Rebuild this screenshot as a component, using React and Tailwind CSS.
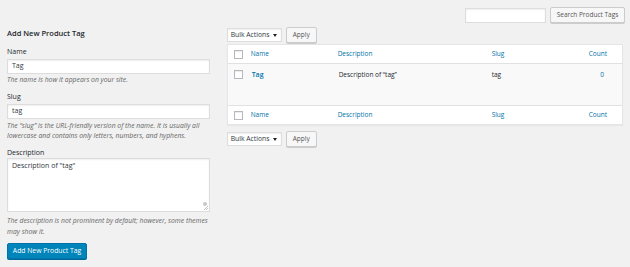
import React from 'react';

const COLUMNS = [
  { key: 'name', label: 'Name', cls: 'w-[87px]' },
  { key: 'description', label: 'Description', cls: 'w-[154px]' },
  { key: 'slug', label: 'Slug', cls: 'flex-1' },
];

function Checkbox() {
  return (
    <div className="w-[9px] h-[9px] bg-white border border-[#b4b9be] shadow-[inset_0_1px_1px_rgba(0,0,0,0.08)]" />
  );
}

function HeadRow({ top }) {
  return (
    <div className={`flex items-center h-[19px] bg-white ${top ? 'border-b' : 'border-t'} border-[#e1e1e1]`}>
      <div className="w-[23px] pl-[6px] flex items-center">
        <Checkbox />
      </div>
      {COLUMNS.map((c) => (
        <div key={c.key} className={`${c.cls} text-[#0073aa]`}>{c.label}</div>
      ))}
      <div className="w-[40px] pr-[15px] text-right text-[#0073aa]">Count</div>
    </div>
  );
}

function BulkBar() {
  return (
    <div className="flex items-center gap-[4px]">
      <div className="flex items-center justify-between w-[55px] h-[14px] bg-white border border-[#ddd] shadow-[inset_0_1px_2px_rgba(0,0,0,0.07)] pl-[3px] pr-[4px] text-[#32373c] text-[6.8px]">
        <span>Bulk Actions</span>
        <svg width="4" height="3" viewBox="0 0 4 3"><path d="M0 0h4L2 3z" fill="#222" /></svg>
      </div>
      <button type="button" className="w-[31px] h-[16px] bg-[#f7f7f7] border border-[#ccc] rounded-[2px] shadow-[0_1px_0_#ccc] text-[#555]">
        Apply
      </button>
    </div>
  );
}

export default function App() {
  return (
    <div className="w-[630px] h-[267px] bg-[#f1f1f1] text-[#23282d] font-['Open_Sans',sans-serif] text-[6.5px] flex px-[7px] overflow-hidden">
      {/* add tag form */}
      <div className="w-[203px] pt-[28px]">
        <h2 className="text-[7.5px] leading-[10px] font-semibold">Add New Product Tag</h2>

        <div className="mt-[9px] leading-[10px] text-[7px]">Name</div>
        <div className="mt-[2px] h-[15px] bg-white border border-[#ddd] shadow-[inset_0_1px_2px_rgba(0,0,0,0.07)] px-[4px] flex items-center text-[7px] text-[#32373c]">Tag</div>
        <p className="mt-[1px] leading-[10px] italic text-[6.8px] text-[#666]">The name is how it appears on your site.</p>

        <div className="mt-[7px] leading-[10px] text-[7px]">Slug</div>
        <div className="mt-[2px] h-[15px] bg-white border border-[#ddd] shadow-[inset_0_1px_2px_rgba(0,0,0,0.07)] px-[4px] flex items-center text-[7px] text-[#32373c]">tag</div>
        <p className="mt-[2px] leading-[9.5px] italic text-[6.8px] text-[#666]">
          The “slug” is the URL-friendly version of the name. It is usually all lowercase and contains only letters, numbers, and hyphens.
        </p>

        <div className="mt-[9px] leading-[8px] text-[7px]">Description</div>
        <div className="relative mt-[1px] h-[54px] bg-white border border-[#ddd] shadow-[inset_0_1px_2px_rgba(0,0,0,0.07)] px-[4px] pt-[2px] text-[7px] text-[#32373c]">
          Description of "tag"
          <span className="absolute right-[2px] bottom-[5px] w-[4px] h-[4px] rounded-full bg-[#c8c8c8]" />
          <svg className="absolute right-[1px] bottom-[1px]" width="4" height="4" viewBox="0 0 4 4">
            <path d="M4 0L0 4M4 2L2 4" stroke="#999" strokeWidth="0.6" />
          </svg>
        </div>
        <p className="mt-[3px] leading-[11px] italic text-[6.8px] text-[#666]">
          The description is not prominent by default; however, some themes may show it.
        </p>

        <button type="button" className="mt-[6px] w-[80px] h-[16px] bg-[#0085ba] border border-[#0073aa] rounded-[2px] shadow-[0_1px_0_#006799] text-white text-[6.8px]">
          Add New Product Tag
        </button>
      </div>

      {/* tag list */}
      <div className="ml-[17px] w-[397px] pt-[7px]">
        <div className="flex justify-end items-center gap-[4px] -mr-[2px]">
          <div className="w-[81px] h-[15px] bg-white border border-[#ddd] shadow-[inset_0_1px_2px_rgba(0,0,0,0.07)]" />
          <button type="button" className="w-[75px] h-[16px] bg-[#f7f7f7] border border-[#ccc] rounded-[2px] shadow-[0_1px_0_#ccc] text-[#555]">
            Search Product Tags
          </button>
        </div>

        <div className="mt-[4px]">
          <BulkBar />
        </div>

        <div className="mt-[1px] border border-[#e5e5e5] shadow-[0_1px_1px_rgba(0,0,0,0.04)]">
          <HeadRow top />
          <div className="flex items-start h-[41px] bg-[#f9f9f9] pt-[6px]">
            <div className="w-[23px] pl-[6px]">
              <Checkbox />
            </div>
            <div className="w-[87px] pl-[1px] font-semibold text-[#0073aa] text-[7px] leading-[9px]">Tag</div>
            <div className="w-[154px] pl-[1px] leading-[9px]">Description of “tag”</div>
            <div className="flex-1 leading-[9px]">tag</div>
            <div className="w-[40px] pr-[18px] text-right text-[#0073aa] leading-[9px]">0</div>
          </div>
          <HeadRow />
        </div>

        <div className="mt-[6px]">
          <BulkBar />
        </div>
      </div>
    </div>
  );
}
